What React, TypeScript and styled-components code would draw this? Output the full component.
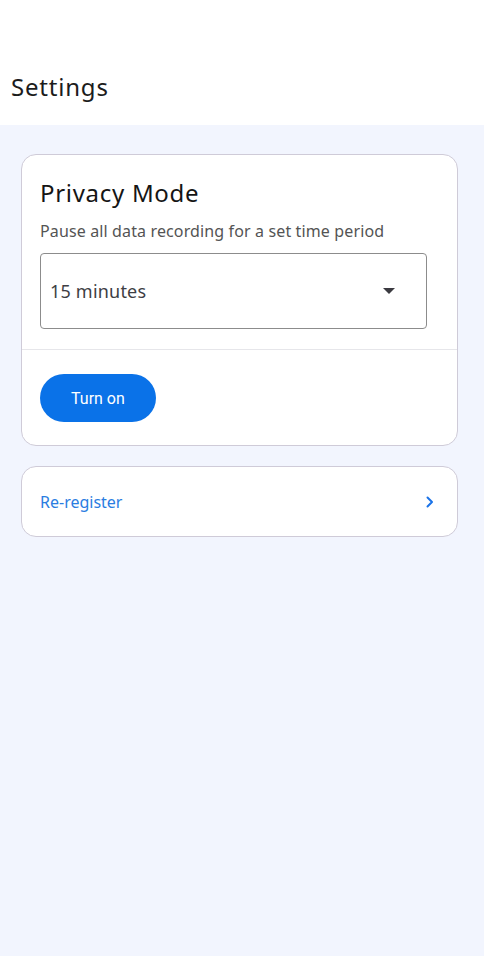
import React from 'react';
import styled, { createGlobalStyle } from 'styled-components';

const GlobalStyle = createGlobalStyle`
    html, body {
        margin: 0;
        padding: 0;
        background: #f2f5fe;
    }
    body {
        font-family: "Noto Sans", "Open Sans", sans-serif;
    }
`;

export default function App() {
    return <Page>
        <GlobalStyle />
        <Header>
            <PageTitle>Settings</PageTitle>
        </Header>
        <Content>
            <Card>
                <CardBody>
                    <CardTitle>Privacy Mode</CardTitle>
                    <CardText>Pause all data recording for a set time period</CardText>
                    <Select>
                        <SelectValue>15 minutes</SelectValue>
                        <Caret />
                    </Select>
                </CardBody>
                <CardActions>
                    <PrimaryButton>Turn on</PrimaryButton>
                </CardActions>
            </Card>
            <LinkCard>
                <LinkLabel>Re-register</LinkLabel>
                <Chevron width="10" height="14" viewBox="0 0 10 14">
                    <path d="M2.5 2.5 L7 7 L2.5 11.5" fill="none" stroke="#1a73e8" strokeWidth="2" strokeLinecap="round" strokeLinejoin="round" />
                </Chevron>
            </LinkCard>
        </Content>
    </Page>;
}

const Page = styled.div`
    min-height: 956px;
    background: #f2f5fe;
`;

const Header = styled.header`
    height: 125px;
    background: #ffffff;
    display: flex;
    align-items: flex-end;
    padding: 0 11px 22px;
    box-sizing: border-box;
`;

const PageTitle = styled.h1`
    margin: 0;
    font-size: 24px;
    font-weight: 400;
    letter-spacing: 0.8px;
    color: #1c1c1c;
    line-height: 32px;
`;

const Content = styled.main`
    padding: 29px 26px 0 21px;
    display: flex;
    flex-direction: column;
    gap: 20px;
`;

const Card = styled.section`
    background: #ffffff;
    border: 1px solid #cfcbd8;
    border-radius: 15px;
`;

const CardBody = styled.div`
    padding: 22px 30px 20px 18px;
    border-bottom: 1px solid #e6e6ea;
`;

const CardTitle = styled.h2`
    margin: 0;
    font-size: 24px;
    font-weight: 400;
    letter-spacing: 0.7px;
    color: #151515;
    line-height: 32px;
`;

const CardText = styled.p`
    margin: 11px 0 0;
    font-size: 16px;
    line-height: 22px;
    letter-spacing: 0.13px;
    color: #545454;
`;

const Select = styled.div`
    margin-top: 11px;
    height: 76px;
    border: 1px solid #8c8c8c;
    border-radius: 4px;
    box-sizing: border-box;
    display: flex;
    align-items: center;
    justify-content: space-between;
    padding: 0 31px 0 9px;
`;

const SelectValue = styled.span`
    font-size: 18px;
    letter-spacing: 0.2px;
    color: #3e3e44;
`;

const Caret = styled.span`
    width: 0;
    height: 0;
    border-left: 6px solid transparent;
    border-right: 6px solid transparent;
    border-top: 6px solid #3b3a40;
`;

const CardActions = styled.div`
    padding: 24px 18px 23px;
`;

const PrimaryButton = styled.button`
    height: 48px;
    padding: 0 31px;
    border: none;
    border-radius: 24px;
    background: #0a72e8;
    color: #ffffff;
    font-family: Roboto, sans-serif;
    font-size: 16px;
    font-weight: 400;
`;

const LinkCard = styled.div`
    height: 71px;
    box-sizing: border-box;
    background: #ffffff;
    border: 1px solid #cfcbd8;
    border-radius: 15px;
    display: flex;
    align-items: center;
    justify-content: space-between;
    padding: 0 22px 0 18px;
`;

const LinkLabel = styled.span`
    font-size: 16px;
    color: #2a7de1;
`;

const Chevron = styled.svg`
    display: block;
`;
